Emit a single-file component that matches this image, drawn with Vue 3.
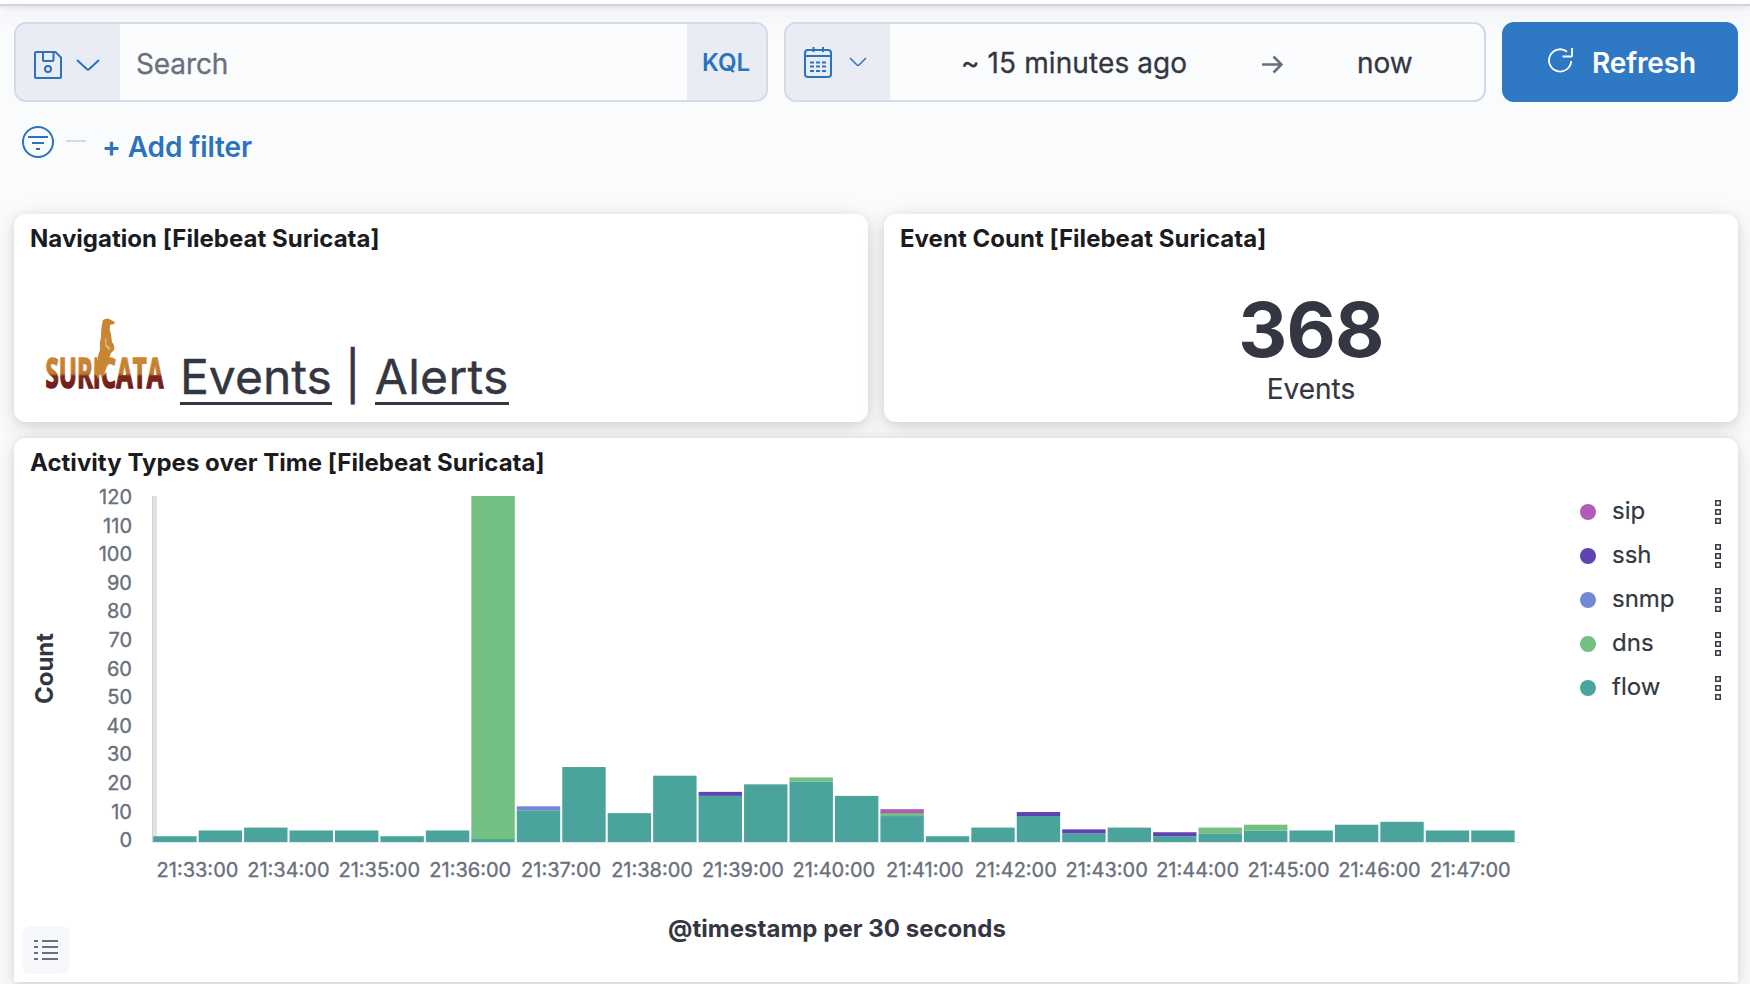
<script setup>
const SERIES = {
  flow: '#4aa49b',
  dns: '#74bf82',
  snmp: '#7189d4',
  ssh: '#6042b2',
  sip: '#b05bb8',
}
const legend = ['sip', 'ssh', 'snmp', 'dns', 'flow']
const buckets = [
  { flow: 2 }, { flow: 4 }, { flow: 5 }, { flow: 4 }, { flow: 4 }, { flow: 2 }, { flow: 4 },
  { flow: 1, dns: 119 }, { flow: 11, snmp: 1 }, { flow: 26 }, { flow: 10 }, { flow: 23 },
  { flow: 16, ssh: 1 }, { flow: 20 }, { flow: 21, dns: 1 }, { flow: 16 },
  { flow: 9, dns: 1, sip: 1 }, { flow: 2 }, { flow: 5 }, { flow: 9, ssh: 1 },
  { flow: 3, ssh: 1 }, { flow: 5 }, { flow: 2, ssh: 1 }, { flow: 3, dns: 2 },
  { flow: 4, dns: 2 }, { flow: 4 }, { flow: 6 }, { flow: 7 }, { flow: 4 }, { flow: 4 },
]
const BASE = 346
const UNIT = BASE / 120
const STEP = 45.45
const bars = buckets.flatMap((bucket, i) => {
  let total = 0
  return Object.keys(SERIES).filter((k) => bucket[k]).map((k) => {
    const height = Math.max(bucket[k] * UNIT, 4)
    const y = BASE - total * UNIT - height
    total += bucket[k]
    return { id: i + k, x: 1.2 + i * STEP, y: Math.max(y, 0), height, fill: SERIES[k] }
  })
})
const yTicks = Array.from({ length: 13 }, (_, i) => 120 - i * 10)
const xTicks = Array.from({ length: 15 }, (_, i) => `21:${33 + i}:00`)
</script>

<template>
  <div class="page">
    <div class="topline"></div>
    <header class="query">
      <div class="search">
        <button class="addon saved">
          <svg width="28" height="28" viewBox="0 0 28 28" class="line"><path d="M2 1h19.500l5.500 5.500V26a1 1 0 0 1-1 1H2a1 1 0 0 1-1-1V2a1 1 0 0 1 1-1zM9 1v8a1 1 0 0 0 1 1h8.500a1 1 0 0 0 1-1V1" /><circle cx="14" cy="18" r="3" /></svg>
          <svg width="24" height="12" viewBox="0 0 24 12" class="line"><path d="M1 1l10 9.300q1 .9 2 0L23 1" /></svg>
        </button>
        <div class="field">Search</div>
        <button class="addon kql">KQL</button>
      </div>
      <div class="dates">
        <button class="addon quick">
          <svg width="28" height="32" viewBox="0 0 28 32" class="line"><rect x="1" y="4" width="26" height="27" rx="3" /><path d="M1 10h26M9.500 1v5M19 1v5" /><path d="M6 16.500h16M6 20.500h16M6 25h16" stroke-dasharray="4 2" /></svg>
          <svg width="18" height="10" viewBox="0 0 18 10" class="line thin"><path d="M1 1l7 7q1 1 2 0l7-7" /></svg>
        </button>
        <div class="range">
          <span class="from">~ 15 minutes ago</span>
          <svg class="arrow" width="21" height="19" viewBox="0 0 21 19"><path d="M0 9.500h19M11.500 1.500l8 8-8 8" /></svg>
          <span class="to">now</span>
        </div>
      </div>
      <button class="refresh">
        <svg width="25" height="27" viewBox="0 0 25 27"><path d="M19 4.700A11.100 11.100 0 1 0 23.200 14M24 1v7.500q0 1-1 1h-8.500" /></svg>
        <span>Refresh</span>
      </button>
    </header>

    <div class="filters">
      <svg width="32" height="32" viewBox="0 0 32 32" class="line"><circle cx="16" cy="16" r="15" /><path d="M6 11h20M10 17h12M14 23h4" /></svg>
      <i class="dash"></i>
      <span class="add">+ Add filter</span>
    </div>

    <main class="grid">
      <section class="panel">
        <h2>Navigation [Filebeat Suricata]</h2>
        <div class="nav">
          <svg class="logo" width="122" height="74" viewBox="0 0 122 74">
            <defs>
              <linearGradient id="burn" gradientUnits="userSpaceOnUse" x1="0" y1="41" x2="0" y2="71">
                <stop offset="0" stop-color="#cb8634" /><stop offset=".48" stop-color="#c27a2e" />
                <stop offset=".58" stop-color="#7a2a1a" /><stop offset="1" stop-color="#701818" />
              </linearGradient>
            </defs>
            <text x="-1" y="70.500" transform="scale(.588 1)" fill="url(#burn)" stroke="url(#burn)" stroke-width="1.600">SURICATA</text>
            <path class="gap" d="M51 38h11l-1 15-5 5-5-2z" />
            <path class="cat" d="M57 2q4-3 8 0l4 2-1 2-4 1q-1 5 1 9l1 8q3 3 2 8l-3 3q-2 4-3 10l-3 9-3 6-2-4-2 5-3-6q-1-7 2-12 1-7 3-11-1-7 1-13 0-10 2-17z" />
            <path class="paw" d="M60 20q-2 7 4 10M59 27l5 5" />
          </svg>
          <a>Events</a><span class="sep">|</span><a class="alerts">Alerts</a>
        </div>
      </section>

      <section class="panel">
        <h2>Event Count [Filebeat Suricata]</h2>
        <div class="metric"><b>368</b><span>Events</span></div>
      </section>

      <section class="panel wide">
        <h2>Activity Types over Time [Filebeat Suricata]</h2>
        <div class="chart">
          <div class="ylabel"><span>Count</span></div>
          <div class="yticks"><span v-for="t in yTicks" :key="t">{{ t }}</span></div>
          <div class="plot">
            <svg width="1370" height="348" viewBox="0 0 1370 348">
              <rect x="0" y="0" width="5" height="347" fill="#e0e0e6" />
              <rect x="0" y="0" width="1" height="347" fill="#d2d2da" />
              <rect x="0" y="346" width="1369" height="1" fill="#e6e7ec" />
              <rect v-for="b in bars" :key="b.id" :x="b.x" :y="b.y" width="43.4" :height="b.height" :fill="b.fill" />
            </svg>
            <div class="xticks"><span v-for="t in xTicks" :key="t">{{ t }}</span></div>
            <div class="xlabel">@timestamp per 30 seconds</div>
          </div>
          <ul class="legend">
            <li v-for="name in legend" :key="name">
              <svg width="16" height="16" viewBox="0 0 16 16"><circle cx="8" cy="8" r="8" :fill="SERIES[name]" /></svg>
              <span>{{ name }}</span>
              <svg class="more" width="6" height="24" viewBox="0 0 6 24"><path d="M.75.75h4.500v4.500H.75zM.75 9.750h4.500v4.500H.75zM.75 18.750h4.500v4.500H.75z" /></svg>
            </li>
          </ul>
        </div>
        <button class="toggle">
          <svg width="24" height="20" viewBox="0 0 24 20"><path d="M0 1h4M8 1h16M0 7h4M8 7h16M0 13h4M8 13h16M0 19h4M8 19h16" /></svg>
        </button>
      </section>
    </main>
  </div>
</template>

<style>
body { margin: 0; overflow: hidden; }
</style>

<style scoped>
.page { width: 1750px; height: 984px; overflow: hidden; background: #fafbfd; font-family: Inter, "Liberation Sans", sans-serif; color: #343741; box-sizing: border-box; }
.page * { box-sizing: border-box; }
button { border: 0; margin: 0; padding: 0; font: inherit; }
svg { display: block; flex: none; }
.line { fill: none; stroke: #2b72bf; stroke-width: 2; }
.thin { stroke-width: 1.5; }
.topline { height: 6px; background: #fff; border-bottom: 2px solid #d0d4e2; box-shadow: 0 2px 4px rgba(0, 0, 0, .08), 0 6px 24px rgba(0, 0, 0, .12); }
.query { display: flex; gap: 16px; padding: 16px 12px 0 14px; height: 96px; position: relative; }
.search, .dates { display: flex; height: 80px; border: 2px solid #d3d9e8; border-radius: 12px; overflow: hidden; background: #fbfcfe; }
.search { width: 754px; background: #e9edf3; }
.dates { width: 702px; }
.addon { background: #e9edf3; color: #2b72bf; display: flex; align-items: center; }
.saved { width: 104px; padding: 5px 0 0 18px; gap: 14px; }
.field { flex: 1; padding: 0 16px; line-height: 80px; font-size: 28px; color: #69707d; height: 78px; letter-spacing: -.1px; background: #fbfcfe; -webkit-text-stroke: .3px #69707d; }
.kql { width: 79px; justify-content: center; font-size: 24px; font-weight: 600; padding-right: 1px; padding-top: 1px; }
.quick { width: 104px; padding-left: 18px; gap: 17px; }
.range { flex: 1; display: flex; align-items: center; font-size: 28px; padding-left: 71px; -webkit-text-stroke: .3px #343741; }
.range span { margin-top: 2px; }
.from { width: 301px; letter-spacing: .1px; }
.arrow { fill: none; stroke: #69707d; stroke-width: 2.600; margin-top: 5px; }
.range .to { margin-left: 74px; }
.refresh { width: 236px; height: 80px; border-radius: 12px; background: #2f78c4; color: #fff; display: flex; align-items: center; padding-left: 46px; gap: 19px; font-size: 28px; font-weight: 600; }
.refresh span { margin-top: 2px; letter-spacing: -.15px; }
.refresh svg { fill: none; stroke: #fff; stroke-width: 1.800; margin-bottom: 3px; }
.filters { height: 112px; padding: 24px 0 0 22px; display: flex; align-items: flex-start; }
.dash { width: 20px; height: 2px; background: #d3dae6; margin: 14px 16px 0 12px; }
.add { font-size: 28px; font-weight: 600; color: #2b72bf; line-height: 34px; margin-top: 4px; letter-spacing: -.1px; }
.grid { display: grid; grid-template-columns: 854px 854px; grid-template-rows: 208px 544px; gap: 16px; padding-left: 14px; }
.panel { background: #fff; border-radius: 12px; box-shadow: 0 1.800px 8px rgba(0, 0, 0, .08), 0 6px 24px rgba(0, 0, 0, .12); }
.wide { grid-column: span 2; border-radius: 12px 12px 0 0; position: relative; }
h2 { margin: 0; padding: 9px 16px 0; font-size: 24px; line-height: 32px; height: 40px; font-weight: 700; color: #1a1c21; white-space: nowrap; letter-spacing: .03px; }
.nav { display: flex; padding: 62px 0 0 32px; height: 168px; font-size: 48px; line-height: 60px; align-items: flex-start; white-space: nowrap; -webkit-text-stroke: .4px #343741; }
.logo { margin: 2px 12px 0 0; overflow: visible; -webkit-text-stroke: 0; }
.logo text { font: 700 41px "Open Sans", sans-serif; }
.cat { fill: #c98534; }
.gap { fill: #fff; }
.paw { fill: none; stroke: #e0b98a; stroke-width: 1.200; }
.nav a { margin-top: 31px; border-bottom: 3px solid #343741; height: 58px; }
.nav .alerts { letter-spacing: .3px; }
.sep { margin: 30px 14px 0 13px; }
.metric { display: flex; flex-direction: column; align-items: center; }
.metric b { font-size: 76px; line-height: 92px; margin-top: 29px; font-weight: 700; letter-spacing: -.8px; }
.metric span { font-size: 28px; line-height: 34px; margin-top: -3px; -webkit-text-stroke: .2px #343741; }
.chart { display: flex; height: 504px; }
.ylabel { width: 61px; height: 380px; display: flex; align-items: center; justify-content: center; font-size: 24px; font-weight: 700; }
.ylabel span { transform: rotate(-90deg); }
.yticks { width: 57px; padding-top: 5px; display: flex; flex-direction: column; align-items: flex-end; font-size: 20px; line-height: 28.610px; color: #69707d; -webkit-text-stroke: .35px #69707d; }
.plot { width: 1370px; margin-left: 20px; padding-top: 18px; }
.xticks { display: grid; grid-template-columns: repeat(15, 90.930px); text-align: center; font-size: 20px; line-height: 24px; color: #69707d; margin-top: 14px; -webkit-text-stroke: .35px #69707d; }
.xlabel { text-align: center; font-size: 24px; line-height: 30px; font-weight: 700; margin-top: 32px; letter-spacing: .03px; }
.legend { list-style: none; margin: 0; padding: 12px 0 0 58px; width: 202px; }
.legend li { height: 44px; display: flex; align-items: center; font-size: 24px; -webkit-text-stroke: .2px #343741; }
.legend span { margin: -3px 0 0 16px; width: 103px; }
.more { fill: none; stroke: #343741; stroke-width: 1.500; }
.toggle { position: absolute; left: 8px; bottom: 8px; width: 48px; height: 48px; border-radius: 8px; background: #f5f7fb; display: grid; place-items: center; }
.toggle svg { fill: none; stroke: #69707d; stroke-width: 2; }
</style>
